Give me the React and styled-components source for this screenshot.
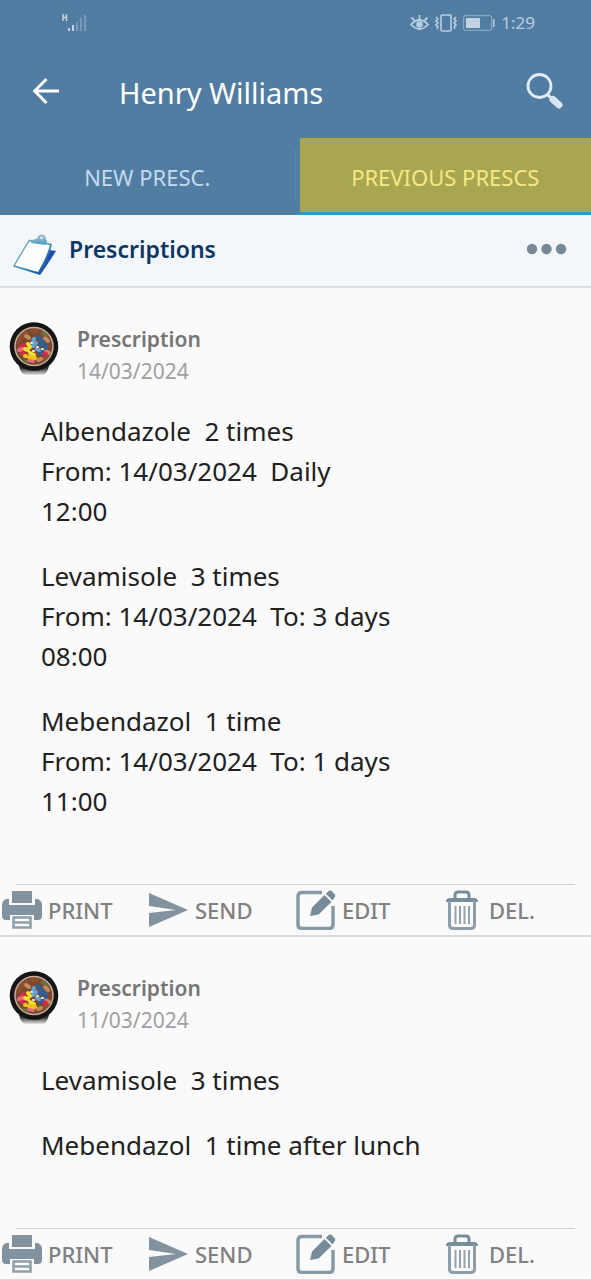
import styled, { createGlobalStyle } from "styled-components";

const GlobalStyle = createGlobalStyle`
  * {
    box-sizing: border-box;
  }
  body {
    margin: 0;
    background-color: #fafafa;
    font-family: "Noto Sans", "Open Sans", sans-serif;
    color: #212121;
  }
  button {
    margin: 0;
    padding: 0;
    border: none;
    background: none;
    font-family: inherit;
    color: inherit;
    cursor: pointer;
  }
  svg {
    display: block;
    flex: none;
  }
`;

const Top = styled.header`
  background-color: #517da2;
`;

const StatusBar = styled.div`
  display: flex;
  align-items: center;
  justify-content: space-between;
  height: 46px;
  padding: 0 56px 0 61px;
`;

const StatusIcons = styled.div`
  display: flex;
  align-items: center;
  gap: 6px;
  font-size: 17px;
  line-height: 24px;
  color: #b9cde0;
`;

const AppBar = styled.div`
  display: flex;
  align-items: center;
  height: 90px;
  padding: 0 28px 0 31px;
`;

const Title = styled.h1`
  flex: 1;
  margin: 0;
  padding: 4px 0 0 58px;
  font-size: 29px;
  line-height: 40px;
  font-weight: 400;
  color: #ffffff;
`;

const Tabs = styled.nav`
  display: grid;
  grid-template-columns: 1fr 1fr;
  height: 77px;
  margin-top: 2px;
`;

const Tab = styled.button`
  display: flex;
  padding: 0 0 3px 0;
  font-size: 22px;
  line-height: 28px;
  color: ${(props) => (props.$active ? "#f8e884" : "#c3daef")};

  & + & {
    margin-left: 1px;
    padding: 0 0 0 3px;
    border-bottom: 3px solid #2a9cc4;
  }
`;

const TabLabel = styled.span`
  flex: 1;
  align-self: stretch;
  display: flex;
  align-items: center;
  justify-content: center;
  padding-top: 4px;
  background-color: ${(props) => (props.$active ? "#a8a650" : "transparent")};
`;

const TabDivider = styled.span`
  align-self: center;
  width: 1px;
  height: 52px;
  background-color: #4a8bc0;
`;

const Section = styled.div`
  display: flex;
  align-items: center;
  height: 73px;
  padding: 0 24px 4px 12px;
  background-color: #f3f7fb;
  border-bottom: 2px solid #dcdfe2;
`;

const SectionTitle = styled.h2`
  flex: 1;
  margin: 0;
  padding-left: 12px;
  font-size: 23px;
  line-height: 32px;
  font-weight: 600;
  color: #0b3764;
`;

const Card = styled.article`
  border-bottom: 2px solid #dadada;
`;

const CardHeader = styled.div`
  display: flex;
  align-items: flex-start;
  gap: 18px;
  padding: 32px 9px 0;
`;

const CardInfo = styled.div`
  padding-top: 3px;
`;

const CardTitle = styled.h3`
  margin: 0;
  font-size: 21px;
  line-height: 32px;
  font-weight: 600;
  color: #757575;
`;

const CardDate = styled.div`
  font-size: 21px;
  line-height: 32px;
  color: #a0a0a0;
`;

const CardBody = styled.div`
  padding: 24px 41px 38px;
`;

const Medicine = styled.p`
  margin: 0 0 25px;
  font-size: 26px;
  line-height: 40px;
  white-space: pre-wrap;
`;

const Actions = styled.div`
  display: grid;
  grid-template-columns: repeat(4, 1fr);
  height: 50px;
  padding-right: 3px;
`;

const Divider = styled.hr`
  height: 1px;
  margin: 0 16px;
  border: none;
  background-color: #d4d4d4;
`;

const Action = styled.button`
  display: flex;
  align-items: center;
  gap: 6px;
  padding-left: 2px;
  font-size: 22px;
  line-height: 32px;
  font-weight: 500;
  color: #808080;
`;

const SignalIcon = () => (
  <svg width="26" height="18" viewBox="0 0 26 18">
    <path d="M2 0v7M5.500 0v7M2 3.500h3.500" stroke="#c6d5e2" strokeWidth="1.400" fill="none" />
    <path d="M7 14h2v3H7zM11 11h2v6h-2z" fill="#c3d3e1" />
    <path d="M15 8h2v9h-2zM19 4h2v13h-2zM23 1h2v16h-2z" fill="#7599b7" />
  </svg>
);

const EyeIcon = () => (
  <svg width="19" height="18" viewBox="0 0 19 18" fill="none" stroke="#b9cde0" strokeWidth="1.800">
    <path d="M1 10.500Q9.500 1.500 18 10.500Q9.500 19.500 1 10.500Z" />
    <path d="M9.500 1v4M1.500 3.500l3 3M17.500 3.500l-3 3" />
    <circle cx="9.500" cy="10.500" r="3.300" fill="#b9cde0" stroke="none" />
  </svg>
);

const VibrateIcon = () => (
  <svg width="22" height="18" viewBox="0 0 22 18" fill="none" stroke="#b9cde0" strokeWidth="1.600">
    <rect x="6" y="1" width="10" height="16" rx="1" />
    <path d="M1 3l2 2-2 2 2 2-2 2 2 2-1 2M21 3l-2 2 2 2-2 2 2 2-2 2 1 2" />
  </svg>
);

const BatteryIcon = () => (
  <svg width="32" height="16" viewBox="0 0 32 16">
    <rect x=".7" y=".7" width="28" height="14.600" rx="1.500" fill="none" stroke="#94b2cb" />
    <path d="M3 3h14v10H3z" fill="#c3d3e2" />
    <path d="M30 4h1.500v8H30z" fill="#b9cde0" />
  </svg>
);

const BackIcon = () => (
  <svg width="30" height="28" viewBox="0 0 30 28" fill="none" stroke="#ffffff" strokeWidth="3">
    <path d="M28 14H4M15.500 2L3.700 14l11.800 12" />
  </svg>
);

const SearchIcon = () => (
  <svg width="37" height="37" viewBox="0 0 37 37">
    <circle cx="13.500" cy="13" r="11.500" fill="none" stroke="#e3edf7" strokeWidth="2.800" />
    <path d="M21.500 21.500l3 3" stroke="#e3edf7" strokeWidth="3" />
    <path d="M27 26.500l6 5.500" stroke="#dbe5f1" strokeWidth="7" strokeLinecap="round" />
  </svg>
);

const ClipboardIcon = () => (
  <svg width="45" height="52" viewBox="0 -10 45 52">
    <defs>
      <linearGradient id="board" x1="0" y1="0" x2="1" y2="1">
        <stop offset="0" stopColor="#8db7c9" />
        <stop offset=".5" stopColor="#3d8fb4" />
        <stop offset="1" stopColor="#123c9c" />
      </linearGradient>
      <linearGradient id="clip" x1="0" y1="0" x2="0" y2="1">
        <stop offset="0" stopColor="#a7c3cc" />
        <stop offset="1" stopColor="#4f9fc4" />
      </linearGradient>
    </defs>
    <path d="M44 18L38 17 27 38l1 4q8-11 16-24z" fill="#1c4fae" />
    <path d="M17 6.500L40 11Q36 27 28 42L1 33.500Q8 21 17 6.500Z" fill="url(#board)" />
    <path d="M17.500 8.500L38 12Q34 26 26 39L3 32.500Q10 20 17.500 8.500Z" fill="#fdfeff" />
    <path d="M20 7l5-1.500q1-4.500 5-4 4 .5 4 5l1.500 1.500-2 4L19 10z" fill="url(#clip)" />
    <circle cx="29.500" cy="5" r="1.300" fill="#eaf3f7" />
  </svg>
);

const MoreIcon = () => (
  <svg width="42" height="12" viewBox="0 0 42 12" fill="#778896">
    <circle cx="7" cy="6" r="5.200" />
    <circle cx="21.500" cy="6" r="5.200" />
    <circle cx="36" cy="6" r="5.200" />
  </svg>
);

const PillsIcon = () => (
  <svg width="50" height="56" viewBox="0 0 50 56">
    <defs>
      <linearGradient id="shadow" x1="0" y1="0" x2="0" y2="1">
        <stop offset=".5" stopColor="#3a3a3a" />
        <stop offset="1" stopColor="#e6e6e6" />
      </linearGradient>
      <clipPath id="bowl">
        <circle cx="25" cy="26.500" r="18.500" />
      </clipPath>
    </defs>
    <path d="M9 42h32q-2 10-6 13H15q-4-3-6-13z" fill="url(#shadow)" />
    <circle cx="25" cy="26.500" r="24.300" fill="#151515" />
    <circle cx="25" cy="26.500" r="19" fill="#7a4a30" stroke="#c9aca0" strokeWidth="1.500" />
    <g clipPath="url(#bowl)" strokeLinecap="round" strokeWidth="4" fill="none">
      <path d="M12 17l5-4M35 38l4-3M23 11h5M9 22l2-2" stroke="#8d4f2c" />
      <path d="M17 16l3 2M37 31l3 2M29 40l3-1M36 18l3 3" stroke="#c28a58" />
      <path d="M34 13l3 2M15 41l3 2" stroke="#6e7438" />
      <path d="M12 27l3-2M13 33l3-1M34 33l3 1" stroke="#d8284d" />
      <path d="M10 30l3-1M20 40l4 1" stroke="#e56a80" />
      <path d="M29 17l3 3M36 24l1 4M31 33l2-2M31 25l3-2" stroke="#2e5f9a" />
      <path d="M25 19l-1 3M28 29l2 1M24 26l3-3" stroke="#67a3cf" />
      <path d="M19 24l2 3M16 29l3 1M21 33l4 2" stroke="#f4df2c" />
      <path d="M20 37l6 1M16 36h1" stroke="#eac61c" />
      <path d="M28 27h1M33 29h1M22 23h1M24 31h1" stroke="#f2e8df" strokeWidth="2" />
    </g>
  </svg>
);

const PrintIcon = () => (
  <svg width="40" height="40" viewBox="0 0 40 40">
    <path d="M10 1h20v12H10z" fill="#82939f" />
    <path
      d="M4 9h3v6h26V9h3q4 2 4 6v11q0 4-4 4h-4v-5H8v5H4q-4 0-4-4V15q0-4 4-6z"
      fill="#82939f"
    />
    <path d="M11.500 27.500h17v10h-17zM12 32.500h16" fill="none" stroke="#8f9faa" strokeWidth="2.500" />
  </svg>
);

const SendIcon = () => (
  <svg width="40" height="40" viewBox="0 0 40 40">
    <path d="M0 3L39 20 0 37V23l27-3L0 16z" fill="#82939f" />
  </svg>
);

const EditIcon = () => (
  <svg width="40" height="40" viewBox="0 0 40 40">
    <path
      d="M26 2.500H6Q2 2.500 2 6.500v28q0 4 4 4h27q4 0 4-4V16"
      fill="none"
      stroke="#8799a5"
      strokeWidth="3.500"
    />
    <path d="M14 26l2-8.500L28.500 5l7 7L22.500 24.500z" fill="#788b98" />
    <path d="M29.800 3.700L33 .8q1.500-1 3 .5l2.500 2.700q1.500 1.500.3 3L36.500 10.500z" fill="#788b98" />
  </svg>
);

const TrashIcon = () => (
  <svg width="40" height="40" viewBox="0 0 40 40" fill="none">
    <path d="M12 8V5q0-3 3-3h8q3 0 3 3v3" stroke="#788b98" strokeWidth="3" />
    <path d="M3 12q0-4 4-4h24q4 0 4 4z" fill="#788b98" />
    <path d="M6.500 11v24q0 3.500 4 3.500h17q4 0 4-3.500V11" stroke="#8d9eaa" strokeWidth="3" />
    <path d="M12.500 16v18M17 16v18M21.500 16v18M26 16v18" stroke="#94a4af" strokeWidth="2" />
  </svg>
);

const prescriptions = [
  {
    date: "14/03/2024",
    medicines: [
      ["Albendazole  2 times", "From: 14/03/2024  Daily", "12:00"],
      ["Levamisole  3 times", "From: 14/03/2024  To: 3 days", "08:00"],
      ["Mebendazol  1 time", "From: 14/03/2024  To: 1 days", "11:00"],
    ],
  },
  {
    date: "11/03/2024",
    medicines: [["Levamisole  3 times"], ["Mebendazol  1 time after lunch"]],
  },
];

const Prescription = ({ item }) => {
  return (
    <Card>
      <CardHeader>
        <PillsIcon />
        <CardInfo>
          <CardTitle>Prescription</CardTitle>
          <CardDate>{item.date}</CardDate>
        </CardInfo>
      </CardHeader>
      <CardBody>
        {item.medicines.map((lines) => (
          <Medicine key={lines[0]}>{lines.join("\n")}</Medicine>
        ))}
      </CardBody>
      <Divider />
      <Actions>
        <Action>
          <PrintIcon />
          PRINT
        </Action>
        <Action>
          <SendIcon />
          SEND
        </Action>
        <Action>
          <EditIcon />
          EDIT
        </Action>
        <Action>
          <TrashIcon />
          DEL.
        </Action>
      </Actions>
    </Card>
  );
};

const App = () => {
  return (
    <>
      <GlobalStyle />
      <Top>
        <StatusBar>
          <SignalIcon />
          <StatusIcons>
            <EyeIcon />
            <VibrateIcon />
            <BatteryIcon />
            <span>1:29</span>
          </StatusIcons>
        </StatusBar>
        <AppBar>
          <button aria-label="Back">
            <BackIcon />
          </button>
          <Title>Henry Williams</Title>
          <button aria-label="Search">
            <SearchIcon />
          </button>
        </AppBar>
        <Tabs>
          <Tab>
            <TabLabel>NEW PRESC.</TabLabel>
            <TabDivider />
          </Tab>
          <Tab $active>
            <TabLabel $active>PREVIOUS PRESCS</TabLabel>
          </Tab>
        </Tabs>
      </Top>
      <Section>
        <ClipboardIcon />
        <SectionTitle>Prescriptions</SectionTitle>
        <button aria-label="More">
          <MoreIcon />
        </button>
      </Section>
      <main>
        {prescriptions.map((item) => (
          <Prescription key={item.date} item={item} />
        ))}
      </main>
    </>
  );
};

export default App;
